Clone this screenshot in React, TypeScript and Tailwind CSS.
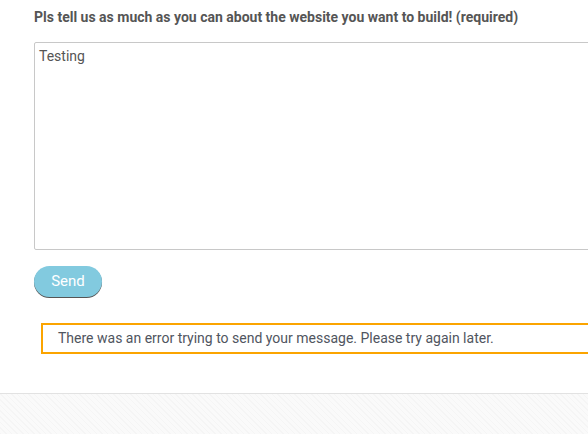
export default function App() {
  return (
    <div className="w-[588px] h-[434px] overflow-hidden bg-white flex flex-col" style={{ fontFamily: 'Roboto, "Liberation Sans", sans-serif' }}>
      <div className="h-[393px] shrink-0 pl-[34px] pt-[8px]">
        <div className="text-[14px] leading-[18px] font-bold text-[#555] whitespace-nowrap">
          Pls tell us as much as you can about the website you want to build! (required)
        </div>
        <div className="mt-[16px] w-[620px] h-[208px] border border-[#c8c8c8] rounded-[2px] px-[4px] pt-[4px] text-[14px] leading-[18px] text-[#555]">
          Testing
        </div>
        <button className="mt-[16px] w-[68px] h-[31px] rounded-full bg-[#82cadf] text-white text-[15px] shadow-[0_1px_0_#555] flex items-center justify-center">
          Send
        </button>
        <div className="mt-[26px] ml-[7px] w-[620px] h-[31px] border-2 border-[#fba400] pl-[15px] flex items-center text-[14px] text-[#505560] whitespace-nowrap">
          There was an error trying to send your message. Please try again later.
        </div>
      </div>
      <div className="flex-1 border-t border-[#e2e2e2] bg-[#f8f8f8] bg-[repeating-linear-gradient(45deg,#f5f5f5_0px,#f5f5f5_1px,#fafafa_1px,#fafafa_4px)]" />
    </div>
  );
}
